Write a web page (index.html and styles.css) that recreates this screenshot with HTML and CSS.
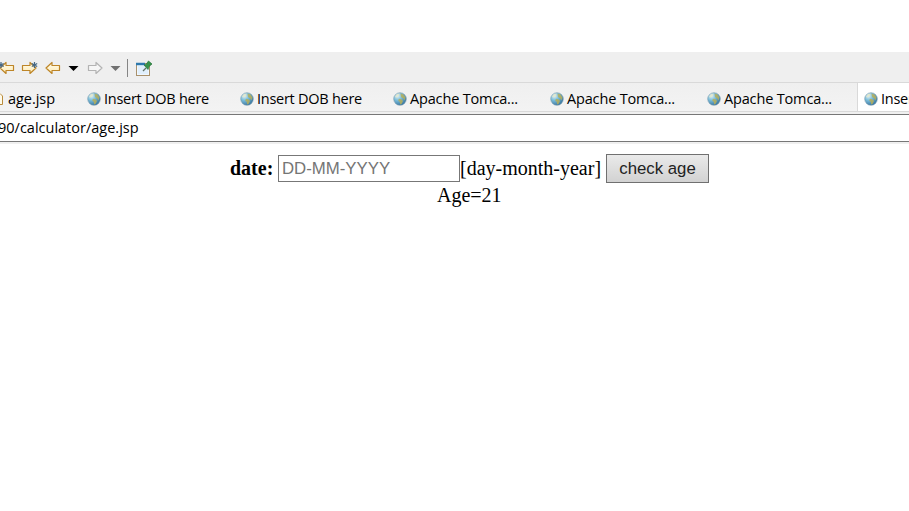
FILE: index.html
```
<!DOCTYPE html>
<html lang="en">
<head>
<meta charset="utf-8">
<title>Insert DOB here</title>
<link rel="stylesheet" href="styles.css">
</head>
<body>
<svg class="defs" width="0" height="0">
  <defs>
    <linearGradient id="gold" x2="0" y2="1"><stop offset="0" stop-color="#fffdf0"/><stop offset="1" stop-color="#ffe9ae"/></linearGradient>
    <radialGradient id="sea" cx=".3" cy=".25" r=".85"><stop offset="0" stop-color="#e6f2f2"/><stop offset=".4" stop-color="#7dbfdc"/><stop offset="1" stop-color="#2f6c98"/></radialGradient>
    <symbol id="arrow" viewBox="0 0 16 14"><path d="M1 7 7 1.500V4.500H14.500V9.500H7V12.500Z" stroke-width="1.200" stroke-linejoin="round"/></symbol>
    <symbol id="globe" viewBox="0 0 14 14">
      <circle cx="7" cy="7" r="6.300" fill="url(#sea)" stroke="#7b9cae" stroke-width=".6"/>
      <path d="M7.500 1.500 10.500 2.500 12.500 5.500 11.500 8.500 10.300 6.500 8 5ZM6 6.800 8.500 7.300 10 9 8.700 11.800 7.200 12.600 6.800 10 5.200 8.500Z" fill="#b5ae59" opacity=".85"/>
      <path d="M2 5 3.500 2.500 6.500 1.500 6 3.500 4 5.500Z" fill="#e2e6c8" opacity=".8"/>
    </symbol>
  </defs>
</svg>
<header class="toolbar">
  <svg width="156" height="30" viewBox="0 0 156 30">
    <g fill="url(#gold)" stroke="#bd8527">
      <use href="#arrow" x="-1" y="9" width="16" height="14"/>
      <use href="#arrow" x="-37" y="9" width="16" height="14" transform="scale(-1 1)"/>
      <use href="#arrow" x="45" y="9" width="16" height="14"/>
    </g>
    <path d="M1 10v6M-1.700 11.500l5.400 3M-1.700 14.500l5.400-3M34.500 10v6M31.800 11.500l5.400 3M31.800 14.500l5.400-3" stroke="#466987" stroke-width="1.200"/>
    <path d="M68.500 14h10l-5 5z" fill="#000"/>
    <use href="#arrow" x="-103" y="9" width="16" height="14" transform="scale(-1 1)" fill="#f6f6f6" stroke="#b3b3b3"/>
    <path d="M110.500 14h10l-5 5z" fill="#717171"/>
    <path d="M127.500 7v18" stroke="#858585"/>
    <rect x="136.500" y="11.500" width="13" height="12" fill="#eff7ff" stroke="#a9916c"/>
    <path d="M136 12h9" stroke="#2d79ad" stroke-width="2.500"/>
    <path d="M138 14h10v8h-10z" fill="#e0effc"/>
    <path d="m143 19 3-3" stroke="#627164" stroke-width="1.200"/>
    <path d="m144 13 2-.5 2.500-3.500 3.500 3-3 2.500-1 3z" fill="#36934a" stroke="#257138" stroke-width=".7"/>
  </svg>
</header>
<nav class="tabs">
  <div class="tab file"><svg width="5" height="14" viewBox="0 0 5 14"><path d="M-4 1.500H0L2.500 4V12.500H-4" fill="#fffbea" stroke="#b98b3c"/></svg><span class="file-name">age.jsp</span></div>
  <div class="tab short"><svg class="globe"><use href="#globe"/></svg><span class="dob">Insert DOB here</span></div>
  <div class="tab short"><svg class="globe"><use href="#globe"/></svg><span class="dob">Insert DOB here</span></div>
  <div class="tab"><svg class="globe"><use href="#globe"/></svg><span class="apache">Apache Tomca...</span></div>
  <div class="tab"><svg class="globe"><use href="#globe"/></svg><span class="apache">Apache Tomca...</span></div>
  <div class="tab last"><svg class="globe"><use href="#globe"/></svg><span class="apache">Apache Tomca...</span></div>
  <div class="tab active"><svg class="globe"><use href="#globe"/></svg><span class="dob">Insert DOB here</span></div>
</nav>
<div class="address"><span>90/calculator/age.jsp</span></div>
<main class="page">
  <form class="form">
    <label class="label" for="date">date:</label>
    <input class="date" id="date" type="text" placeholder="DD-MM-YYYY">
    <span class="hint">[day-month-year]</span>
    <button class="check" type="button">check age</button>
  </form>
  <div class="result">Age=21</div>
</main>
</body>
</html>
```
FILE: styles.css
```
* { box-sizing: border-box; }
body {
  margin: 0;
  padding-top: 52px;
  height: 511px;
  overflow: hidden;
  background: #fff;
  color: #000;
  font-family: "Open Sans", "Noto Sans", sans-serif;
  font-size: 14.5px;
}
svg { display: block; flex: none; }
.defs { position: absolute; }
.toolbar { height: 30px; background: #efefef; }
.tabs {
  display: flex;
  height: 30px;
  overflow: hidden;
  border-top: 1px solid #d9d9d9;
  border-bottom: 1px solid #d9d9d9;
  background: linear-gradient(#efefef, #f3f3f3);
}
.tab {
  display: flex;
  flex: none;
  align-items: center;
  width: 157px;
  padding-top: 3px;
  gap: 3.5px;
  line-height: 20px;
  white-space: nowrap;
}
.globe { width: 14px; height: 14px; }
.file { width: 86.5px; gap: 3px; }
.short { width: 153px; }
.last { width: 151.5px; border-right: 1px solid #d9d9d9; }
.active { padding-left: 5.5px; background: #fff; }
.file-name { letter-spacing: -.05px; }
.dob { letter-spacing: -.26px; }
.apache { letter-spacing: -.16px; }
.address {
  height: 32px;
  padding-top: 2px;
  background: #f0f0f0;
}
.address span {
  display: block;
  height: 28px;
  border-top: 1px solid #777;
  border-bottom: 1px solid #777;
  background: #fff;
  line-height: 26px;
  text-indent: -2px;
}
.page {
  padding-top: 10px;
  font: 20px/24px "Liberation Serif", serif;
}
.form { display: flex; align-items: center; height: 29px; padding-left: 230px; }
.label { width: 48px; padding-bottom: 2px; font-weight: bold; }
.date {
  width: 182px;
  height: 27px;
  padding: 0 3px;
  border: 1px solid #777;
  border-radius: 0;
  font: 16.8px "Liberation Sans", sans-serif;
}
.date::placeholder { color: #757575; }
.hint { width: 146px; padding-bottom: 2px; white-space: nowrap; }
.check {
  width: 103px;
  height: 29px;
  padding: 0;
  border: 1px solid #707070;
  border-radius: 0;
  background: linear-gradient(#eaeaea, #d2d2d2);
  color: #222;
  font: 16.8px "Liberation Sans", sans-serif;
}
.result { padding-left: 437px; }
```
